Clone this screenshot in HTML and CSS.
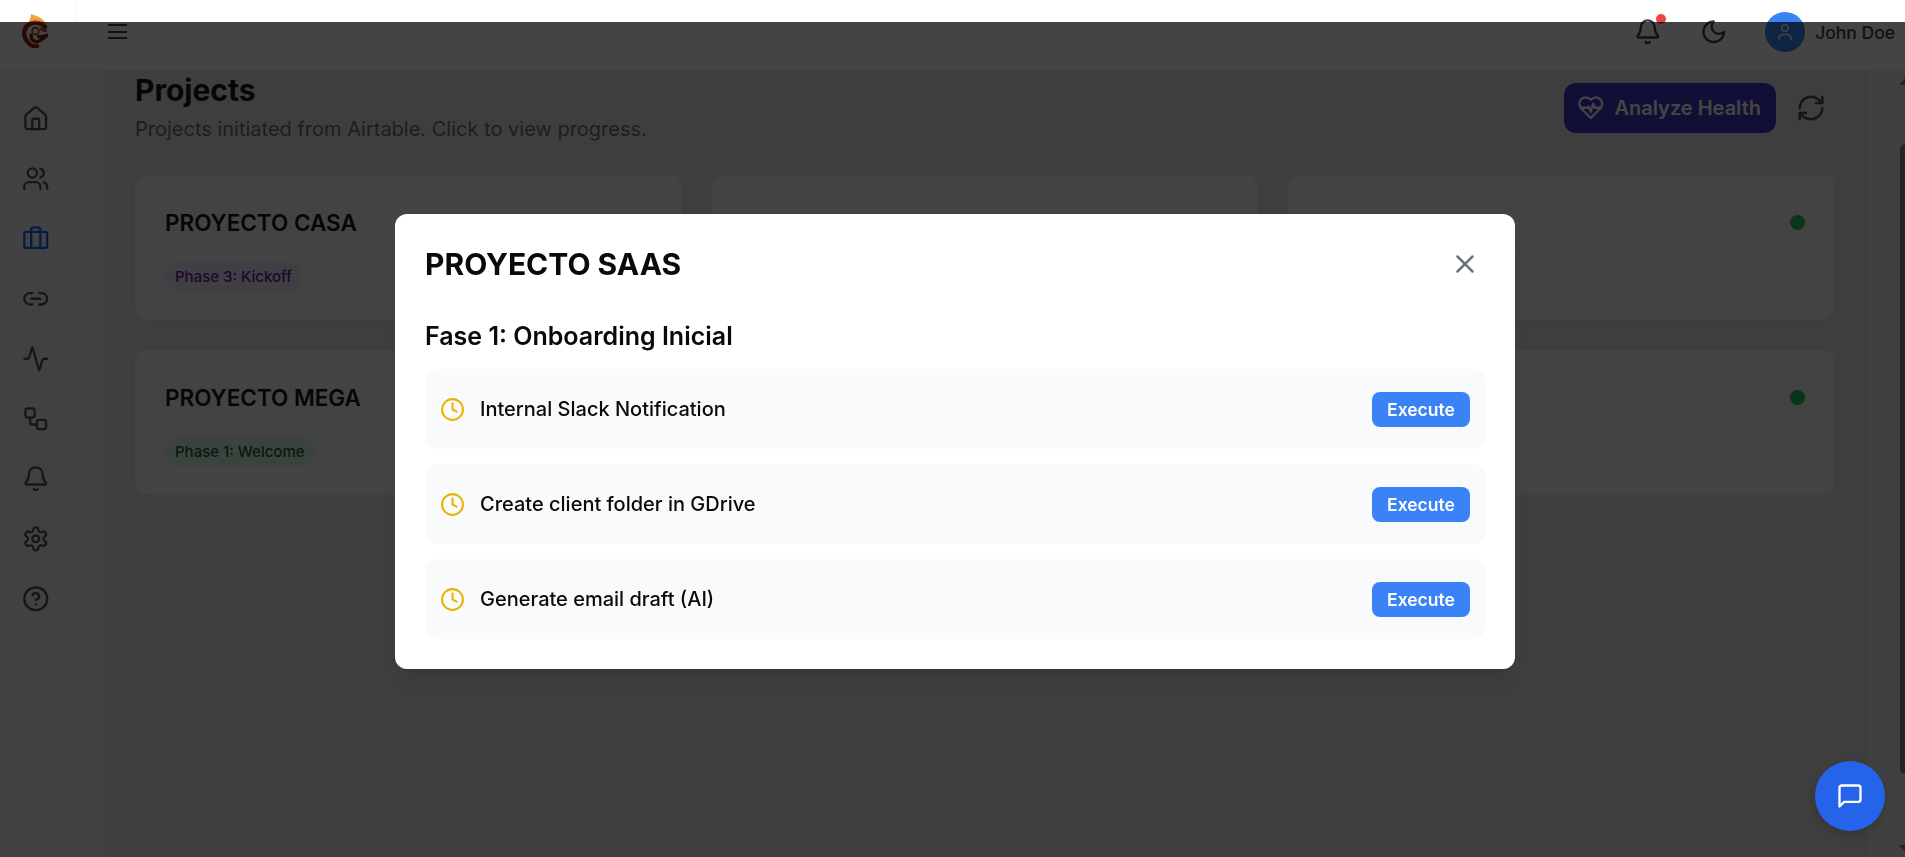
FILE: index.html
```html
<!DOCTYPE html>
<html lang="en">
<head>
  <meta charset="UTF-8">
  <title>Projects</title>
  <link rel="stylesheet" href="styles.css">
</head>
<body>
  <svg class="sprite" width="0" height="0">
    <symbol id="i-house" viewBox="0 0 24 24"><path d="M15 21v-8a1 1 0 0 0-1-1h-4a1 1 0 0 0-1 1v8"/><path d="M3 10a2 2 0 0 1 .709-1.528l7-5.999a2 2 0 0 1 2.582 0l7 5.999A2 2 0 0 1 21 10v9a2 2 0 0 1-2 2H5a2 2 0 0 1-2-2z"/></symbol>
    <symbol id="i-users" viewBox="0 0 24 24"><path d="M16 21v-2a4 4 0 0 0-4-4H6a4 4 0 0 0-4 4v2"/><circle cx="9" cy="7" r="4"/><path d="M22 21v-2a4 4 0 0 0-3-3.87"/><path d="M16 3.13a4 4 0 0 1 0 7.75"/></symbol>
    <symbol id="i-briefcase" viewBox="0 0 24 24"><rect x="2" y="6" width="20" height="14" rx="2"/><path d="M16 20V4a2 2 0 0 0-2-2h-4a2 2 0 0 0-2 2v16"/></symbol>
    <symbol id="i-link" viewBox="0 0 24 24"><path d="M9 17H7A5 5 0 0 1 7 7h2"/><path d="M15 7h2a5 5 0 1 1 0 10h-2"/><path d="M8 12h8"/></symbol>
    <symbol id="i-activity" viewBox="0 0 24 24"><path d="M22 12h-2.48a2 2 0 0 0-1.93 1.46l-2.35 8.36a.25.25 0 0 1-.48 0L9.24 2.18a.25.25 0 0 0-.48 0l-2.35 8.36A2 2 0 0 1 4.49 12H2"/></symbol>
    <symbol id="i-workflow" viewBox="0 0 24 24"><rect x="3" y="3" width="8" height="8" rx="2"/><path d="M7 11v4a2 2 0 0 0 2 2h4"/><rect x="13" y="13" width="8" height="8" rx="2"/></symbol>
    <symbol id="i-bell" viewBox="0 0 24 24"><path d="M10.268 21a2 2 0 0 0 3.464 0"/><path d="M3.262 15.326A1 1 0 0 0 4 17h16a1 1 0 0 0 .74-1.673C19.41 13.956 18 12.499 18 8A6 6 0 0 0 6 8c0 4.499-1.411 5.956-2.738 7.326"/></symbol>
    <symbol id="i-settings" viewBox="0 0 24 24"><path d="M12.22 2h-.44a2 2 0 0 0-2 2v.18a2 2 0 0 1-1 1.73l-.43.25a2 2 0 0 1-2 0l-.15-.08a2 2 0 0 0-2.73.73l-.22.38a2 2 0 0 0 .73 2.73l.15.1a2 2 0 0 1 1 1.72v.51a2 2 0 0 1-1 1.74l-.15.09a2 2 0 0 0-.73 2.73l.22.38a2 2 0 0 0 2.73.73l.15-.08a2 2 0 0 1 2 0l.43.25a2 2 0 0 1 1 1.73V20a2 2 0 0 0 2 2h.44a2 2 0 0 0 2-2v-.18a2 2 0 0 1 1-1.73l.43-.25a2 2 0 0 1 2 0l.15.08a2 2 0 0 0 2.73-.73l.22-.39a2 2 0 0 0-.73-2.73l-.15-.08a2 2 0 0 1-1-1.74v-.5a2 2 0 0 1 1-1.74l.15-.09a2 2 0 0 0 .73-2.73l-.22-.38a2 2 0 0 0-2.73-.73l-.15.08a2 2 0 0 1-2 0l-.43-.25a2 2 0 0 1-1-1.73V4a2 2 0 0 0-2-2z"/><circle cx="12" cy="12" r="3"/></symbol>
    <symbol id="i-help" viewBox="0 0 24 24"><circle cx="12" cy="12" r="10"/><path d="M9.09 9a3 3 0 0 1 5.83 1c0 2-3 3-3 3"/><path d="M12 17h.01"/></symbol>
    <symbol id="i-clock" viewBox="0 0 24 24"><circle cx="12" cy="12" r="10"/><path d="M12 6v6l4 2"/></symbol>
  </svg>

  <div class="app">
    <!-- top bar -->
    <header class="topbar">
      <div class="logo-cell">
        <svg class="logo" viewBox="0 0 26 34" fill="none">
          <path d="M5 8C8 7 9 3 9 0c5 2 12 3 16 11C20 7 12 5 5 8Z" fill="#f0a23a"/>
          <path d="M23 13C19 8 11 7 6 11 1 15 1 22 5 27c3 4 7 6 10 5" stroke="#a82c16" stroke-width="4.500" stroke-linecap="round"/>
          <circle cx="13.500" cy="17" r="3.400" stroke="#a8401c" stroke-width="1.600"/>
          <path d="M9 21c0 5 4 8 8 6 3-1 5-3 7.500-5.500-3 .5-5 2-8 1" stroke="#8f1d10" stroke-width="3.400" stroke-linecap="round"/>
          <path d="M19 15c1 1 3 2 5 1.500" stroke="#a8401c" stroke-width="2.400" stroke-linecap="round"/>
        </svg>
      </div>
      <button class="menu-btn"><span></span><span></span><span></span></button>
      <div class="topbar-right">
        <div class="bell">
          <svg class="ico ico-27"><use href="#i-bell"/></svg>
          <span class="bell-dot"></span>
        </div>
        <svg class="ico ico-27 moon" viewBox="0 0 24 24"><path d="M12 3a6 6 0 0 0 9 9 9 9 0 1 1-9-9Z"/></svg>
        <div class="user">
          <span class="avatar">
            <svg class="ico ico-20" viewBox="0 0 24 24"><path d="M19 21v-2a4 4 0 0 0-4-4H9a4 4 0 0 0-4 4v2"/><circle cx="12" cy="7" r="4"/></svg>
          </span>
          <span class="user-name">John Doe</span>
        </div>
      </div>
    </header>

    <div class="body-row">
      <aside class="sidebar">
        <nav class="nav">
          <a class="nav-item"><svg class="ico ico-27"><use href="#i-house"/></svg></a>
          <a class="nav-item"><svg class="ico ico-27"><use href="#i-users"/></svg></a>
          <a class="nav-item active"><svg class="ico ico-27"><use href="#i-briefcase"/></svg></a>
          <a class="nav-item"><svg class="ico ico-27"><use href="#i-link"/></svg></a>
          <a class="nav-item"><svg class="ico ico-27"><use href="#i-activity"/></svg></a>
          <a class="nav-item"><svg class="ico ico-27"><use href="#i-workflow"/></svg></a>
          <a class="nav-item"><svg class="ico ico-27"><use href="#i-bell"/></svg></a>
          <a class="nav-item"><svg class="ico ico-27"><use href="#i-settings"/></svg></a>
          <a class="nav-item"><svg class="ico ico-27"><use href="#i-help"/></svg></a>
        </nav>
      </aside>

      <main class="main">
        <div class="page-head">
          <div>
            <h1 class="page-title">Projects</h1>
            <p class="page-sub">Projects initiated from Airtable. Click to view progress.</p>
          </div>
          <div class="page-actions">
            <button class="btn-health">
              <svg class="ico ico-27" viewBox="0 0 24 24"><path d="M19 14c1.49-1.46 3-3.21 3-5.500A5.500 5.500 0 0 0 16.500 3c-1.760 0-3 .5-4.500 2-1.500-1.500-2.740-2-4.500-2A5.500 5.500 0 0 0 2 8.500c0 2.300 1.500 4.050 3 5.500l7 7Z"/><path d="M3.220 12H9.500l.5-1 2 4.500 2-7 1.500 3.500h5.270"/></svg>
              Analyze Health
            </button>
            <button class="btn-refresh">
              <svg class="ico ico-30" viewBox="0 0 24 24"><path d="M3 12a9 9 0 0 1 9-9 9.750 9.750 0 0 1 6.740 2.740L21 8"/><path d="M21 3v5h-5"/><path d="M21 12a9 9 0 0 1-9 9 9.750 9.750 0 0 1-6.740-2.740L3 16"/><path d="M8 16H3v5"/></svg>
            </button>
          </div>
        </div>

        <div class="cards">
          <div class="card">
            <div>
              <div class="card-title">PROYECTO CASA</div>
              <span class="badge badge-purple">Phase 3: Kickoff</span>
            </div>
          </div>
          <div class="card"></div>
          <div class="card card-end"><span class="dot"></span></div>
          <div class="card">
            <div>
              <div class="card-title">PROYECTO MEGA</div>
              <span class="badge badge-green">Phase 1: Welcome</span>
            </div>
          </div>
          <div class="card"></div>
          <div class="card card-end"><span class="dot"></span></div>
        </div>
      </main>

      <div class="scrollbar">
        <span class="scroll-up"></span>
        <span class="scroll-thumb"></span>
        <span class="scroll-down"></span>
      </div>
    </div>
  </div>

  <!-- modal -->
  <div class="overlay">
    <div class="modal">
      <div class="modal-head">
        <h2 class="modal-title">PROYECTO SAAS</h2>
        <svg class="ico modal-close" viewBox="0 0 24 24"><path d="M18 6 6 18"/><path d="m6 6 12 12"/></svg>
      </div>
      <h3 class="phase-title">Fase 1: Onboarding Inicial</h3>
      <div class="tasks">
        <div class="task">
          <div class="task-label"><svg class="ico clock"><use href="#i-clock"/></svg>Internal Slack Notification</div>
          <button class="btn-exec">Execute</button>
        </div>
        <div class="task">
          <div class="task-label"><svg class="ico clock"><use href="#i-clock"/></svg>Create client folder in GDrive</div>
          <button class="btn-exec">Execute</button>
        </div>
        <div class="task">
          <div class="task-label"><svg class="ico clock"><use href="#i-clock"/></svg>Generate email draft (AI)</div>
          <button class="btn-exec">Execute</button>
        </div>
      </div>
    </div>
  </div>

  <button class="chat-btn">
    <svg class="ico ico-28" viewBox="0 0 24 24"><path d="M21 15a2 2 0 0 1-2 2H7l-4 4V5a2 2 0 0 1 2-2h14a2 2 0 0 1 2 2z"/></svg>
  </button>
</body>
</html>
```

FILE: styles.css
```css
html, body {
  height: 100%;
  margin: 0;
  font-family: 'Inter', sans-serif;
  overflow: hidden;
}
button {
  font-family: inherit;
  border: none;
  background: none;
  padding: 0;
  cursor: pointer;
}
.sprite {
  position: absolute;
}
.ico {
  fill: none;
  stroke: currentColor;
  stroke-width: 2;
  stroke-linecap: round;
  stroke-linejoin: round;
  flex-shrink: 0;
  display: block;
}
.ico-20 { width: 20px; height: 20px; }
.ico-27 { width: 27.5px; height: 27.5px; }
.ico-28 { width: 28px; height: 28px; }
.ico-30 { width: 30px; height: 30px; }

.app {
  height: 100vh;
  display: flex;
  flex-direction: column;
  background: #f0f0f0;
}

/* top bar */
.topbar {
  height: 70px;
  flex-shrink: 0;
  display: flex;
  align-items: center;
  background: #fff;
  border-bottom: 1px solid #eef0f2;
  box-sizing: content-box;
  color: #374151;
}
.logo-cell {
  width: 76px;
  height: 100%;
  flex-shrink: 0;
  display: flex;
  justify-content: center;
  padding: 14px 6px 0 0;
  box-sizing: border-box;
  border-right: 1px solid #f3f4f6;
}
.logo {
  width: 26px;
  height: 34px;
}
.menu-btn {
  margin: -7px 0 0 32px;
  width: 19px;
  display: flex;
  flex-direction: column;
  gap: 4.5px;
}
.menu-btn span {
  height: 2px;
  background: #374151;
}
.topbar-right {
  margin-left: auto;
  margin-top: -6px;
  padding-right: 10px;
  display: flex;
  align-items: center;
}
.bell {
  position: relative;
  color: #374151;
}
.bell-dot {
  position: absolute;
  top: -4px;
  right: -4px;
  width: 10px;
  height: 10px;
  border-radius: 50%;
  background: #ef4444;
}
.moon {
  margin-left: 38px;
}
.user {
  margin-left: 38px;
  display: flex;
  align-items: center;
  gap: 10px;
}
.avatar {
  width: 40px;
  height: 40px;
  border-radius: 50%;
  background: #3b82f6;
  color: #fff;
  display: flex;
  align-items: center;
  justify-content: center;
}
.user-name {
  font-size: 17.5px;
  font-weight: 500;
  color: #374151;
}

/* sidebar + content */
.body-row {
  flex: 1;
  display: flex;
  min-height: 0;
  position: relative;
}
.sidebar {
  width: 105px;
  flex-shrink: 0;
  border-right: 1px solid #eef0f2;
  box-sizing: border-box;
  background: #f2f2f2;
}
.nav {
  width: 76px;
  height: 100%;
  padding-top: 21px;
  box-sizing: border-box;
  background: #f4f4f4;
  border-right: 1px solid #f1f2f3;
  display: flex;
  flex-direction: column;
  gap: 6px;
}
.nav-item {
  height: 54px;
  padding-right: 4px;
  display: flex;
  align-items: center;
  justify-content: center;
  color: #4b5563;
}
.nav-item.active {
  background: #eff6ff;
  color: #2563eb;
}
.main {
  flex: 1;
  margin-right: 38px;
  padding: 1px 32px 0 30px;
  min-width: 0;
  background: #e9e9e9;
}
.page-head {
  display: flex;
  justify-content: space-between;
  align-items: center;
  margin-bottom: 32px;
}
.page-title {
  margin: 0;
  font-size: 30px;
  line-height: 36px;
  font-weight: 700;
  color: #111827;
}
.page-sub {
  margin: 7px 0 0;
  font-size: 20px;
  line-height: 28px;
  color: #6b7280;
}
.page-actions {
  display: flex;
  align-items: center;
  gap: 11px;
}
.btn-health {
  height: 50px;
  padding: 0 15px 0 13px;
  display: flex;
  align-items: center;
  gap: 9.5px;
  border-radius: 12px;
  background: #4338ca;
  color: #fff;
  font-size: 20px;
  font-weight: 600;
}
.btn-refresh {
  width: 48px;
  height: 48px;
  display: flex;
  align-items: center;
  justify-content: center;
  color: #4b5563;
}
.cards {
  display: grid;
  grid-template-columns: repeat(3, 1fr);
  gap: 30px;
}
.card {
  height: 145px;
  box-sizing: border-box;
  padding: 30px;
  background: #fafafa;
  border-radius: 12px;
  box-shadow: 0 1px 3px rgba(0,0,0,0.04);
  display: flex;
}
.card-end {
  justify-content: flex-end;
}
.card-title {
  font-size: 22.5px;
  line-height: 36px;
  font-weight: 600;
  color: #111827;
  margin-bottom: 21px;
}
.badge {
  display: inline-block;
  padding: 0 10px;
  height: 29px;
  line-height: 29px;
  border-radius: 15px;
  font-size: 15px;
  font-weight: 500;
}
.badge-purple {
  background: #f3e8ff;
  color: #6b21a8;
}
.badge-green {
  background: #dcfce7;
  color: #166534;
}
.dot {
  width: 15px;
  height: 15px;
  margin-top: 10px;
  border-radius: 50%;
  background: #22c55e;
}

/* page scrollbar, cut off at the window edge */
.scrollbar {
  width: 5px;
  position: absolute;
  top: 0;
  bottom: 0;
  right: 0;
}
.scroll-up, .scroll-down {
  position: absolute;
  right: 0;
  width: 0;
  height: 0;
  border-left: 6px solid transparent;
}
.scroll-up {
  top: 7px;
  border-bottom: 7px solid #8a8a8a;
}
.scroll-down {
  bottom: 5px;
  border-top: 7px solid #8a8a8a;
}
.scroll-thumb {
  position: absolute;
  top: 73px;
  left: 0;
  right: 0;
  height: 630px;
  border-radius: 5px 0 0 5px;
  background: #8a8a8a;
}

/* modal */
.overlay {
  position: fixed;
  top: 22px;
  left: 0;
  right: 0;
  bottom: 0;
  padding: 4px 0 0 5px;
  display: flex;
  align-items: center;
  justify-content: center;
  background: rgba(0,0,0,0.735);
}
.modal {
  width: 1120px;
  height: 455px;
  box-sizing: border-box;
  padding: 30px;
  background: #fff;
  border-radius: 12px;
  box-shadow: 0 20px 25px -5px rgba(0,0,0,0.1), 0 8px 10px -6px rgba(0,0,0,0.1);
}
.modal-head {
  display: flex;
  justify-content: space-between;
  align-items: center;
  height: 40px;
}
.modal-title {
  margin: 0;
  font-size: 30px;
  line-height: 40px;
  font-weight: 700;
  color: #0a0a0a;
}
.modal-close {
  width: 30px;
  height: 30px;
  color: #6b7280;
  margin-right: 5px;
}
.phase-title {
  margin: 36px 0 17px;
  font-size: 25px;
  line-height: 32px;
  font-weight: 600;
  color: #0a0a0a;
}
.tasks {
  display: flex;
  flex-direction: column;
  gap: 15px;
}
.task {
  height: 80px;
  padding: 0 15px;
  display: flex;
  align-items: center;
  justify-content: space-between;
  background: #f9fafb;
  border-radius: 12px;
}
.task-label {
  display: flex;
  align-items: center;
  gap: 15px;
  font-size: 20px;
  font-weight: 500;
  color: #0a0a0a;
}
.clock {
  width: 25px;
  height: 25px;
  color: #eab308;
}
.btn-exec {
  width: 98px;
  height: 35px;
  border-radius: 8px;
  background: #3b82f6;
  color: #fff;
  font-size: 17.5px;
  font-weight: 600;
}
.chat-btn {
  position: fixed;
  right: 20px;
  bottom: 26px;
  width: 70px;
  height: 70px;
  border-radius: 50%;
  background: #2563eb;
  color: #fff;
  display: flex;
  align-items: center;
  justify-content: center;
  box-shadow: 0 4px 10px rgba(0,0,0,0.15);
}
```
